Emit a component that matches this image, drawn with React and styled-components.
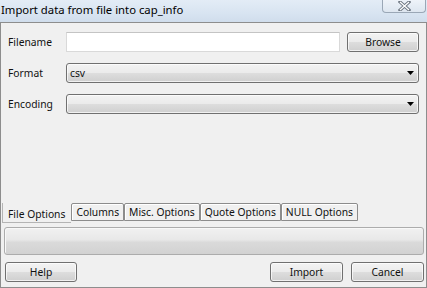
import React from "react";
import styled, { createGlobalStyle } from "styled-components";

const Global = createGlobalStyle`
  html, body { margin: 0; padding: 0; background: #f0f0f0; }
  body { font-family: "Noto Sans", "Open Sans", sans-serif; font-size: 10.3px; color: #111; }
  * { box-sizing: border-box; }
`;

const Window = styled.div`
  width: 427px;
  height: 288px;
  display: flex;
  flex-direction: column;
  overflow: hidden;
`;

const TitleBar = styled.div`
  height: 22px;
  flex: none;
  display: flex;
  align-items: flex-start;
  justify-content: space-between;
  background: linear-gradient(180deg, #e3ecf6 0%, #d8e4f1 60%, #d0ddec 100%);
`;

const Title = styled.div`
  padding: 2px 0 0 1px;
  font-size: 11.3px;
  line-height: 16px;
  color: #000;
`;

const CloseButton = styled.div`
  width: 44px;
  height: 13px;
  margin-right: 1px;
  border: 1px solid #9aa7b6;
  border-top: none;
  border-radius: 0 0 4px 4px;
  background: linear-gradient(180deg, #eef3f9 0%, #dde6f0 100%);
  display: flex;
  align-items: center;
  justify-content: center;
`;

const Body = styled.div`
  flex: 1;
  display: flex;
  flex-direction: column;
  border: 1px solid #8d8d8d;
  background: #f0f0f0;
  padding: 9px 0 5px 0;
`;

const Form = styled.div`
  display: grid;
  grid-template-columns: 58px 1fr;
  grid-auto-rows: 20px;
  row-gap: 11px;
  padding: 0 7px 0 7px;
  align-items: center;
`;

const Label = styled.div`
  line-height: 20px;
`;

const FieldRow = styled.div`
  display: flex;
  gap: 7px;
  height: 20px;
`;

const TextInput = styled.div`
  flex: 1;
  height: 20px;
  background: #fff;
  border: 1px solid #d9d9d9;
  border-top-color: #c4c4c4;
`;

const Button = styled.div`
  width: ${(p) => p.$w}px;
  height: 20px;
  display: flex;
  align-items: center;
  justify-content: center;
  border: 1px solid #707070;
  border-radius: 3px;
  background: linear-gradient(180deg, #f3f3f3 0%, #ebebeb 48%, #dddddd 52%, #cfcfcf 100%);
  box-shadow: inset 0 0 0 1px rgba(255,255,255,0.7);
  line-height: 16px;
`;

const Combo = styled.div`
  height: 20px;
  display: flex;
  align-items: center;
  justify-content: space-between;
  padding: 0 4px 0 3px;
  border: 1px solid #707070;
  border-radius: 3px;
  background: linear-gradient(180deg, #f3f3f3 0%, #ebebeb 48%, #dddddd 52%, #cfcfcf 100%);
  box-shadow: inset 0 0 0 1px rgba(255,255,255,0.7);
`;

const Arrow = () => (
  <svg width="7" height="4" viewBox="0 0 7 4">
    <path d="M0 0H7L3.5 4Z" fill="#000" />
  </svg>
);

const TabStrip = styled.div`
  margin-top: auto;
  margin-left: 1px;
  height: 21px;
  display: flex;
  align-items: flex-end;
`;

const Tab = styled.div`
  height: ${(p) => (p.$active ? 20 : 18)}px;
  margin-bottom: ${(p) => (p.$active ? 0 : 2)}px;
  padding: ${(p) => (p.$active ? "4px 6px 0 5px" : "1px 4px 0 4px")};
  line-height: 14px;
  white-space: nowrap;
  border: 1px solid #8c8c8c;
  border-radius: 2px 2px 0 0;
  background: #f0f0f0;
  box-shadow: inset 1px 1px 0 #fff;
  ${(p) =>
    p.$active &&
    `border-color: #b4b4b4; border-top: none; border-right: none; border-radius: 0; box-shadow: none;`}
`;

const Panel = styled.div`
  margin: 4px 2px 0 3px;
  height: 28px;
  border: 1px solid #acacac;
  border-radius: 3px;
  background: linear-gradient(180deg, #f1f1f1 0%, #e8e8e8 45%, #dadada 55%, #d2d2d2 100%);
  box-shadow: inset 1px 1px 0 #f8f8f8;
`;

const ButtonBar = styled.div`
  margin-top: 7px;
  display: flex;
  padding: 0 2px 0 4px;
  gap: 8px;
`;

const Spacer = styled.div`
  flex: 1;
`;

const tabs = ["File Options", "Columns", "Misc. Options", "Quote Options", "NULL Options"];

export default function App() {
  return (
    <>
      <Global />
      <Window>
        <TitleBar>
          <Title>Import data from file into cap_info</Title>
          <CloseButton>
            <svg width="13" height="10" viewBox="0 0 13 10">
              <path d="M2 1L11 9M11 1L2 9" stroke="#6d7681" strokeWidth="3.2" strokeLinecap="square" />
              <path d="M2 1L11 9M11 1L2 9" stroke="#ffffff" strokeWidth="1.3" />
            </svg>
          </CloseButton>
        </TitleBar>
        <Body>
          <Form>
            <Label>Filename</Label>
            <FieldRow>
              <TextInput />
              <Button $w={72}>Browse</Button>
            </FieldRow>
            <Label>Format</Label>
            <Combo>
              <span>csv</span>
              <Arrow />
            </Combo>
            <Label>Encoding</Label>
            <Combo>
              <span />
              <Arrow />
            </Combo>
          </Form>
          <TabStrip>
            {tabs.map((t, i) => (
              <Tab key={t} $active={i === 0}>
                {t}
              </Tab>
            ))}
          </TabStrip>
          <Panel />
          <ButtonBar>
            <Button $w={72}>Help</Button>
            <Spacer />
            <Button $w={73}>Import</Button>
            <Button $w={73}>Cancel</Button>
          </ButtonBar>
        </Body>
      </Window>
    </>
  );
}
